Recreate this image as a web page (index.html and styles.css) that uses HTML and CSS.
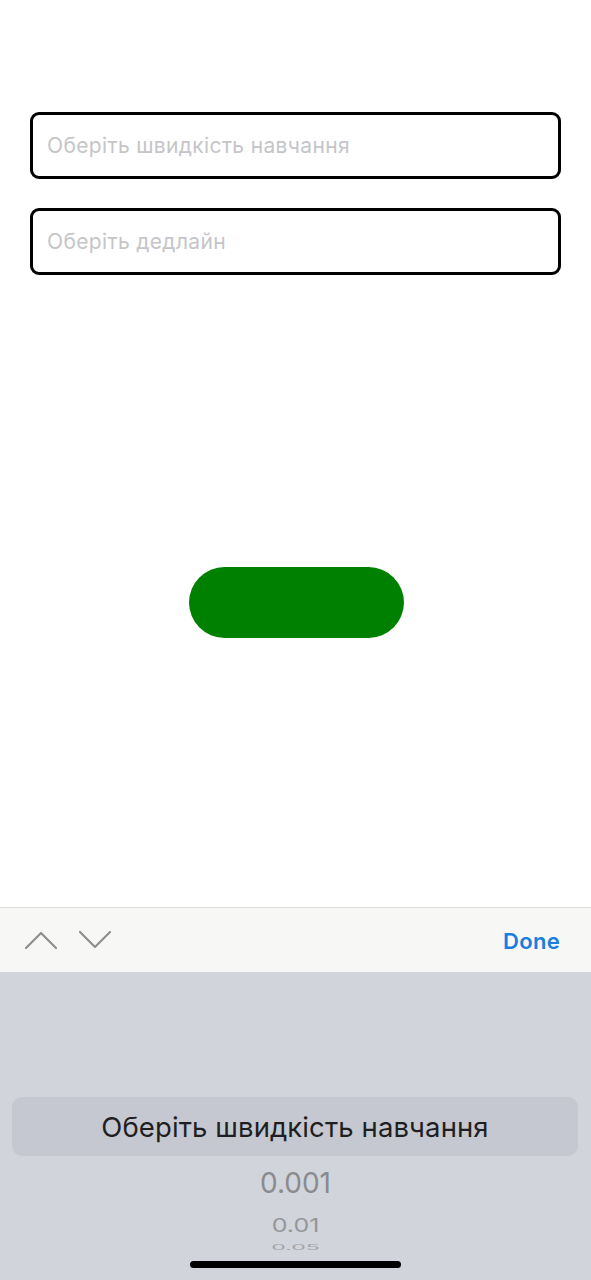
FILE: index.html
```html
<!DOCTYPE html>
<html lang="uk">
<head>
<meta charset="utf-8">
<link rel="stylesheet" href="styles.css">
</head>
<body>
<div class="screen">
  <main class="content">
    <div class="field"><span class="placeholder">Оберіть швидкість навчання</span></div>
    <div class="field"><span class="placeholder">Оберіть дедлайн</span></div>
    <div class="btn-row"><button class="go" type="button"></button></div>
  </main>
  <div class="toolbar">
    <div class="arrows">
      <svg class="chev" width="34" height="22" viewBox="0 0 34 22"><path d="M2 19 L17 4 L32 19" fill="none" stroke="#8e8e8e" stroke-width="2.2" stroke-linecap="round" stroke-linejoin="round"/></svg>
      <svg class="chev" width="34" height="22" viewBox="0 0 34 22"><path d="M2 3 L17 18 L32 3" fill="none" stroke="#8e8e8e" stroke-width="2.2" stroke-linecap="round" stroke-linejoin="round"/></svg>
    </div>
    <span class="done">Done</span>
  </div>
  <div class="picker">
    <div class="sel">Оберіть швидкість навчання</div>
    <div class="opt opt1">0.001</div>
    <div class="opt opt2">0.01</div>
    <div class="opt opt3">0.05</div>
    <div class="home"></div>
  </div>
</div>
</body>
</html>
```
FILE: styles.css
```css
* { box-sizing: border-box; }
html, body { margin: 0; padding: 0; background: #fff; }
body { font-family: Inter, "Noto Sans", "Liberation Sans", sans-serif; }
.screen {
  width: 591px;
  height: 1280px;
  display: flex;
  flex-direction: column;
  overflow: hidden;
}
.content {
  flex: 1;
  padding: 112px 30px 0 30px;
  display: flex;
  flex-direction: column;
  gap: 29px;
}
.field {
  height: 67px;
  border: 3px solid #000;
  border-radius: 9px;
  display: flex;
  align-items: center;
  padding-left: 14px;
}
.placeholder {
  font-size: 21px;
  color: #c5c5c9;
  letter-spacing: 0.35px;
  margin-top: -1px;
}
.btn-row {
  display: flex;
  justify-content: center;
  margin-top: 263px;
}
.go {
  width: 215px;
  height: 71px;
  border: none;
  border-radius: 36px;
  background: #008000;
  margin-left: 1px;
}
.toolbar {
  height: 65px;
  border-top: 1px solid #dcdcdc;
  background: #f7f7f5;
  display: flex;
  align-items: center;
  justify-content: space-between;
  padding: 0 31px 0 24px;
}
.arrows {
  display: flex;
  gap: 20px;
  align-items: center;
}
.done {
  color: #1a7de0;
  font-size: 22px;
  font-weight: 600;
  letter-spacing: 0.3px;
  margin-top: 2px;
}
.picker {
  height: 308px;
  background: #d1d4da;
  position: relative;
  display: flex;
  flex-direction: column;
  align-items: center;
  padding-top: 125px;
}
.sel {
  align-self: stretch;
  margin: 0 13px 0 12px;
  height: 59px;
  border-radius: 10px;
  background: #c5c8d0;
  display: flex;
  align-items: center;
  justify-content: center;
  font-size: 27.5px;
  letter-spacing: 0.1px;
  color: #1f1f22;
}
.opt {
  color: #8a8b8f;
  line-height: 1;
}
.opt1 {
  font-size: 28px;
  margin-top: 13px;
}
.opt2 {
  font-size: 25px;
  margin-top: 16px;
  transform: scaleY(0.75);
  color: #96979b;
}
.opt3 {
  font-size: 23px;
  margin-top: -2px;
  transform: scaleY(0.3);
  color: #a3a4a8;
}
.home {
  position: absolute;
  left: 190px;
  bottom: 12px;
  width: 211px;
  height: 7px;
  border-radius: 4px;
  background: #000;
}
```
